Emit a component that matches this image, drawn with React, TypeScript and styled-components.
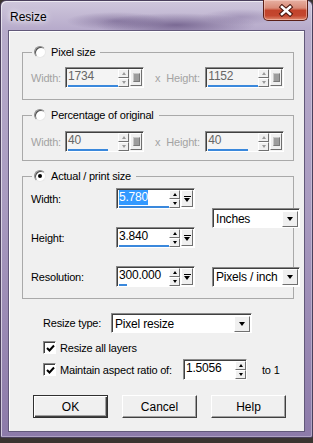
import styled, { createGlobalStyle, css } from "styled-components";

const GlobalStyle = createGlobalStyle`
  html, body {
    margin: 0;
    padding: 0;
  }
  body {
    width: 313px;
    height: 443px;
    overflow: hidden;
    background: #3a3430;
    font-family: "Liberation Sans", Arial, sans-serif;
  }
`;

const sunken = css`
  box-sizing: border-box;
  border: 1px solid;
  border-color: #8a8a8a #ffffff #ffffff #8a8a8a;
  box-shadow: inset 1px 1px 0 #404040;
`;

const raised = css`
  box-sizing: border-box;
  background: #f0f0f0;
  border: 1px solid;
  border-color: #ffffff #707070 #707070 #ffffff;
`;

const Window = styled.div`
  box-sizing: border-box;
  width: 313px;
  height: 438px;
  display: flex;
  flex-direction: column;
  padding: 0 7px 5px;
  border: 1px solid #4a3f5c;
  border-radius: 6px 6px 2px 2px;
  background:
    radial-gradient(ellipse 80px 12px at 175px 24px, rgba(80, 60, 110, 0.6), transparent),
    radial-gradient(ellipse 50px 9px at 115px 20px, rgba(90, 70, 120, 0.45), transparent),
    radial-gradient(ellipse 40px 8px at 240px 16px, rgba(110, 90, 140, 0.35), transparent),
    linear-gradient(180deg, #cfc7dc 0px, #b7abcb 28px, #a99bc0 200px, #8c7aa9 438px);
  box-shadow: inset 1px 1px 0 rgba(255, 255, 255, 0.6),
    inset -1px -1px 0 rgba(255, 255, 255, 0.3);
`;

const TitleBar = styled.div`
  display: flex;
  align-items: flex-start;
  justify-content: space-between;
  height: 29px;
  margin: 0 -7px;
  padding: 0 4px 0 9px;
`;

const Title = styled.span`
  align-self: center;
  margin-top: 3px;
  font-size: 12px;
  color: #000;
  text-shadow: 0 0 5px #fff, 0 0 9px rgba(255, 255, 255, 0.9);
`;

const CloseButton = styled.div`
  box-sizing: border-box;
  width: 45px;
  height: 21px;
  margin-top: -1px;
  display: flex;
  align-items: center;
  justify-content: center;
  border: 1px solid #5b1f17;
  border-top: none;
  border-radius: 0 0 5px 5px;
  background: linear-gradient(
    180deg,
    #e7b0a2 0%,
    #d98b78 40%,
    #c2432b 52%,
    #c4472f 78%,
    #df8a70 100%
  );
  box-shadow: inset 0 0 0 1px rgba(255, 225, 215, 0.45);
`;

const Client = styled.div`
  flex: 1;
  display: flex;
  flex-direction: column;
  background: #f0f0f0;
  border: 1px solid #62597a;
  box-shadow: inset 1px 1px 0 #fff;
  padding: 14px 10px 0 13px;
  font-size: 11px;
  letter-spacing: -0.2px;
  color: #000;
`;

const Group = styled.fieldset<{ $pt: number; $pb: number }>`
  margin: 0;
  min-width: 0;
  border: 1px solid #a9a9a9;
  padding: ${(p) => p.$pt}px 8px ${(p) => p.$pb}px 8px;
  & + & {
    margin-top: 8px;
  }
`;

const Legend = styled.legend`
  display: flex;
  align-items: center;
  gap: 5px;
  height: 14px;
  padding: 0 5px 0 2px;
  margin-left: 1px;
`;

const Radio = styled.span<{ $checked?: boolean }>`
  box-sizing: border-box;
  position: relative;
  width: 12px;
  height: 12px;
  border-radius: 50%;
  background: #fff;
  border: 1px solid;
  border-color: #8a8a8a #e8e8e8 #e8e8e8 #8a8a8a;
  box-shadow: inset 1px 1px 0 #505050;
  display: flex;
  align-items: center;
  justify-content: center;
  &::after {
    content: "";
    display: ${(p) => (p.$checked ? "block" : "none")};
    width: 4px;
    height: 4px;
    border-radius: 50%;
    background: #000;
  }
`;

const SizeRow = styled.div`
  display: flex;
  align-items: center;
`;

const Label = styled.span<{ $disabled?: boolean; $w?: number; $ml?: number }>`
  flex: none;
  color: ${(p) => (p.$disabled ? "#a3a3a3" : "#000")};
  width: ${(p) => (p.$w ? `${p.$w}px` : "auto")};
  margin-left: ${(p) => p.$ml ?? 0}px;
  white-space: nowrap;
`;

const SpinFrame = styled.div<{ $w: number; $disabled?: boolean; $ml?: number }>`
  ${sunken};
  flex: none;
  display: flex;
  width: ${(p) => p.$w}px;
  height: 21px;
  margin-left: ${(p) => p.$ml ?? 0}px;
  padding: 1px 0 0 1px;
  background: ${(p) => (p.$disabled ? "#f4f4f4" : "#fff")};
`;

const SpinText = styled.div<{ $disabled?: boolean }>`
  flex: 1;
  display: flex;
  flex-direction: column;
  justify-content: space-between;
  color: ${(p) => (p.$disabled ? "#666" : "#000")};
  font-size: 12px;
  line-height: 15px;
  padding-left: 1px;
`;

const Selected = styled.span`
  align-self: flex-start;
  background: #3399ff;
  color: #fff;
`;

const ValueBar = styled.div`
  height: 2px;
  background: #3a88dc;
`;

const SpinArrows = styled.div`
  width: 11px;
  display: flex;
  flex-direction: column;
`;

const ArrowButton = styled.div`
  ${raised};
  flex: 1;
  display: flex;
  align-items: center;
  justify-content: center;
`;

const Tri = styled.span<{ $up?: boolean; $disabled?: boolean; $size?: number }>`
  width: 0;
  height: 0;
  border-left: ${(p) => p.$size ?? 2.5}px solid transparent;
  border-right: ${(p) => p.$size ?? 2.5}px solid transparent;
  ${(p) =>
    p.$up
      ? `border-bottom: ${Math.ceil((p.$size ?? 2.5) * 1.1)}px solid ${p.$disabled ? "#9a9a9a" : "#000"};`
      : `border-top: ${Math.ceil((p.$size ?? 2.5) * 1.1)}px solid ${p.$disabled ? "#9a9a9a" : "#000"};`}
`;

const EndButton = styled.div`
  ${raised};
  width: 12px;
  margin: 0 1px 1px 1px;
  display: flex;
  flex-direction: column;
  align-items: center;
  justify-content: center;
  gap: 1px;
`;

const EndBlock = styled.span`
  width: 5px;
  height: 7px;
  background: #9d9d9d;
  border: 1px solid #b8b8b8;
  border-color: #c8c8c8 #7a7a7a #7a7a7a #c8c8c8;
`;

const EndBar = styled.span`
  width: 7px;
  height: 1px;
  background: #000;
`;

function SpinBox({
  value,
  fill,
  disabled,
  selected,
  end = true,
  width = 79,
  ml,
}: {
  value: string;
  fill: number;
  disabled?: boolean;
  selected?: boolean;
  end?: boolean;
  width?: number;
  ml?: number;
}) {
  return (
    <SpinFrame $w={width} $disabled={disabled} $ml={ml}>
      <SpinText $disabled={disabled}>
        {selected ? <Selected>{value}</Selected> : <span>{value}</span>}
        <ValueBar style={{ width: `${fill}%` }} />
      </SpinText>
      <SpinArrows>
        <ArrowButton>
          <Tri $up $disabled={disabled} />
        </ArrowButton>
        <ArrowButton>
          <Tri $disabled={disabled} />
        </ArrowButton>
      </SpinArrows>
      {end && (
        <EndButton>
          {disabled ? (
            <EndBlock />
          ) : (
            <>
              <EndBar />
              <Tri $size={3.5} />
            </>
          )}
        </EndButton>
      )}
    </SpinFrame>
  );
}

const SelectBox = styled.div<{ $w: number }>`
  ${sunken};
  display: flex;
  align-items: center;
  width: ${(p) => p.$w}px;
  height: 20px;
  padding: 2px 1px 1px 3px;
  background: #fff;
`;

const SelectText = styled.span`
  flex: 1;
  font-size: 12px;
  white-space: nowrap;
`;

const DropButton = styled.div`
  ${raised};
  width: 16px;
  height: 16px;
  display: flex;
  align-items: center;
  justify-content: center;
`;

function Select({ value, width }: { value: string; width: number }) {
  return (
    <SelectBox $w={width}>
      <SelectText>{value}</SelectText>
      <DropButton>
        <Tri $size={3.5} />
      </DropButton>
    </SelectBox>
  );
}

const PrintGrid = styled.div`
  display: grid;
  grid-template-columns: 68px 79px 88px;
  grid-template-rows: repeat(3, 21px);
  column-gap: 17px;
  row-gap: 18px;
  align-items: center;
`;

const UnitCell = styled.div<{ $row: string }>`
  grid-column: 3;
  grid-row: ${(p) => p.$row};
  align-self: center;
`;

const Options = styled.div`
  display: flex;
  flex-direction: column;
  margin: 14px 0 0 21px;
`;

const OptionRow = styled.div<{ $mt: number }>`
  display: flex;
  align-items: center;
  margin-top: ${(p) => p.$mt}px;
`;

const CheckBox = styled.span`
  ${sunken};
  flex: none;
  width: 13px;
  height: 13px;
  background: #fff;
  display: flex;
  align-items: center;
  justify-content: center;
  padding: 1px 0 0 1px;
`;

const ButtonRow = styled.div`
  display: flex;
  gap: 14px;
  margin: 15px 0 0 11px;
`;

const DialogButton = styled.button<{ $default?: boolean }>`
  box-sizing: border-box;
  width: 75px;
  height: 23px;
  padding: 0;
  font-family: "Liberation Sans", Arial, sans-serif;
  font-size: 12px;
  color: #000;
  background: #f0f0f0;
  border: 1px solid;
  border-color: #ffffff #404040 #404040 #ffffff;
  box-shadow: inset -1px -1px 0 #a0a0a0;
  ${(p) =>
    p.$default &&
    css`
      border-color: #303030;
      box-shadow: inset 1px 1px 0 #fff, inset -1px -1px 0 #404040,
        inset -2px -2px 0 #a0a0a0;
    `}
`;

function Check() {
  return (
    <svg width="9" height="9" viewBox="0 0 9 9">
      <polyline points="1,4 3.5,6.5 8,1.5" fill="none" stroke="#000" strokeWidth="2" />
    </svg>
  );
}

function CloseIcon() {
  return (
    <svg width="16" height="13" viewBox="0 0 16 13">
      <g strokeLinecap="square">
        <path d="M4 3 L12 10 M12 3 L4 10" stroke="#4a150c" strokeWidth="4.6" />
        <path d="M4 3 L12 10 M12 3 L4 10" stroke="#ffffff" strokeWidth="2.6" />
      </g>
    </svg>
  );
}

export default function App() {
  return (
    <>
      <GlobalStyle />
      <Window>
        <TitleBar>
          <Title>Resize</Title>
          <CloseButton>
            <CloseIcon />
          </CloseButton>
        </TitleBar>
        <Client>
          <Group $pt={8} $pb={11}>
            <Legend>
              <Radio />
              Pixel size
            </Legend>
            <SizeRow>
              <Label $disabled $w={34}>
                Width:
              </Label>
              <SpinBox value="1734" fill={100} disabled />
              <Label $disabled $ml={11}>
                x
              </Label>
              <Label $disabled $ml={6} $w={39}>
                Height:
              </Label>
              <SpinBox value="1152" fill={100} disabled />
            </SizeRow>
          </Group>
          <Group $pt={9} $pb={8}>
            <Legend>
              <Radio />
              Percentage of original
            </Legend>
            <SizeRow>
              <Label $disabled $w={34}>
                Width:
              </Label>
              <SpinBox value="40" fill={80} disabled />
              <Label $disabled $ml={11}>
                x
              </Label>
              <Label $disabled $ml={6} $w={39}>
                Height:
              </Label>
              <SpinBox value="40" fill={80} disabled />
            </SizeRow>
          </Group>
          <Group $pt={5} $pb={11}>
            <Legend>
              <Radio $checked />
              Actual / print size
            </Legend>
            <PrintGrid>
              <Label>Width:</Label>
              <SpinBox value="5.780" fill={100} selected />
              <UnitCell $row="1 / span 2">
                <Select value="Inches" width={88} />
              </UnitCell>
              <Label>Height:</Label>
              <SpinBox value="3.840" fill={100} />
              <Label>Resolution:</Label>
              <SpinBox value="300.000" fill={15} />
              <UnitCell $row="3">
                <Select value="Pixels / inch" width={88} />
              </UnitCell>
            </PrintGrid>
          </Group>
          <Options>
            <OptionRow $mt={0}>
              <Label $w={68}>Resize type:</Label>
              <Select value="Pixel resize" width={141} />
            </OptionRow>
            <OptionRow $mt={8}>
              <CheckBox>
                <Check />
              </CheckBox>
              <Label $ml={4}>Resize all layers</Label>
            </OptionRow>
            <OptionRow $mt={5}>
              <CheckBox>
                <Check />
              </CheckBox>
              <Label $ml={4} $w={123}>
                Maintain aspect ratio of:
              </Label>
              <SpinBox value="1.5056" fill={0} end={false} width={64} />
              <Label $ml={15}>to 1</Label>
            </OptionRow>
          </Options>
          <ButtonRow>
            <DialogButton $default>OK</DialogButton>
            <DialogButton>Cancel</DialogButton>
            <DialogButton>Help</DialogButton>
          </ButtonRow>
        </Client>
      </Window>
    </>
  );
}
